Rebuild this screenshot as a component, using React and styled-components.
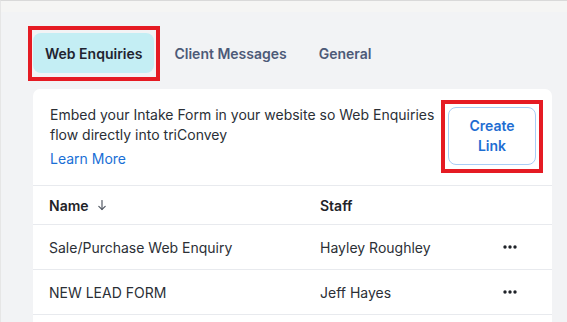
import React from 'react';
import styled, { createGlobalStyle } from 'styled-components';

const GlobalStyle = createGlobalStyle`
	html, body {
		margin: 0;
		padding: 0;
		background: #f2f3f5;
	}
	body {
		font-family: Inter, 'Noto Sans', 'Liberation Sans', sans-serif;
		font-size: 14px;
		color: #2b2f36;
		overflow: hidden;
	}
`;

const rows = [
	{ name: 'Sale/Purchase Web Enquiry', staff: 'Hayley Roughley' },
	{ name: 'NEW LEAD FORM', staff: 'Jeff Hayes' },
	{ name: '', staff: '' },
];

const tabs = ['Web Enquiries', 'Client Messages', 'General'];

const Dots = () => (
	<svg width="14" height="4" viewBox="0 0 14 4">
		<circle cx="2" cy="2" r="1.7" fill="#1f2328" />
		<circle cx="7" cy="2" r="1.7" fill="#1f2328" />
		<circle cx="12" cy="2" r="1.7" fill="#1f2328" />
	</svg>
);

const SortArrow = () => (
	<svg width="10" height="12" viewBox="0 0 10 12" fill="none" stroke="#555b66" strokeWidth="1.2" strokeLinecap="round">
		<path d="M5 1.5v9" />
		<path d="M1.8 7.3L5 10.5l3.2-3.2" />
	</svg>
);

const App = () => {
	return (
		<Page>
			<GlobalStyle />
			<TopStrip />
			<Content>
				<Tabs>
					{tabs.map((t, i) => (
						<Tab key={t} active={i === 0}>
							{t}
						</Tab>
					))}
				</Tabs>
				<Card>
					<Intro>
						<IntroText>
							<Desc>
								Embed your Intake Form in your website so Web Enquiries
								<br />
								flow directly into triConvey
							</Desc>
							<LearnMore href="#">Learn More</LearnMore>
						</IntroText>
						<CreateBtn>
							Create
							<br />
							Link
						</CreateBtn>
					</Intro>
					<HeadRow>
						<HeadCell>
							Name <SortArrow />
						</HeadCell>
						<HeadCell>Staff</HeadCell>
						<span />
					</HeadRow>
					{rows.map((r, i) => (
						<Row key={i}>
							<Cell>{r.name}</Cell>
							<Cell>{r.staff}</Cell>
							<More>{r.name && <Dots />}</More>
						</Row>
					))}
				</Card>
			</Content>
		</Page>
	);
};

const Page = styled.div`
	height: 322px;
	overflow: hidden;
	border-top: 1px solid #d9d9d9;
	border-left: 1px solid #e6e6e6;
	box-sizing: border-box;
`;
const TopStrip = styled.div`
	height: 11px;
	background: #f5f5f4;
`;
const Content = styled.div`
	padding: 21px 15px 0 32px;
`;
const Tabs = styled.div`
	display: flex;
	gap: 8px;
	margin-bottom: 16px;
`;
const Tab = styled.div`
	position: relative;
	height: 40px;
	display: flex;
	align-items: center;
	padding: 0 12px;
	border-radius: 8px;
	font-weight: 600;
	background: ${(p) => (p.active ? '#c4eef4' : 'transparent')};
	color: ${(p) => (p.active ? '#1f2430' : '#4d5a78')};
	&::after {
		content: '';
		display: ${(p) => (p.active ? 'block' : 'none')};
		position: absolute;
		top: -7px;
		left: -5px;
		right: -6px;
		bottom: -8px;
		border: 4px solid #e51b23;
		pointer-events: none;
	}
`;
const Card = styled.div`
	background: #fff;
	border-radius: 7px 7px 0 0;
	height: 260px;
`;
const Intro = styled.div`
	display: flex;
	justify-content: space-between;
	align-items: flex-start;
	padding: 16px 16px 16px 17px;
	border-bottom: 1px solid #e8eaee;
`;
const IntroText = styled.div`
	display: flex;
	flex-direction: column;
	align-items: flex-start;
`;
const Desc = styled.p`
	margin: 0;
	line-height: 20px;
	color: #2b2f36;
`;
const LearnMore = styled.a`
	margin-top: 4px;
	line-height: 20px;
	color: #1a6fd6;
	text-decoration: none;
`;
const CreateBtn = styled.button`
	position: relative;
	margin-top: 2px;
	width: 88px;
	height: 58px;
	padding: 0;
	background: #fff;
	border: 1px solid #a9cdf6;
	border-radius: 8px;
	font-family: inherit;
	font-size: 14px;
	font-weight: 600;
	line-height: 20px;
	color: #1e6dd2;
	&::after {
		content: '';
		position: absolute;
		top: -8px;
		left: -8px;
		right: -8px;
		bottom: -9px;
		border: 4px solid #e51b23;
		box-sizing: border-box;
		pointer-events: none;
	}
`;
const HeadRow = styled.div`
	display: grid;
	grid-template-columns: 271px 1fr 52px;
	align-items: center;
	height: 38px;
	padding: 0 16px;
	border-bottom: 1px solid #e8eaee;
`;
const HeadCell = styled.div`
	display: flex;
	align-items: center;
	gap: 8px;
	font-weight: 600;
	color: #1f2328;
`;
const Row = styled.div`
	display: grid;
	grid-template-columns: 271px 1fr 52px;
	align-items: center;
	height: 44px;
	padding: 0 16px;
	border-bottom: 1px solid #e8eaee;
`;
const Cell = styled.div`
	color: #2b2f36;
`;
const More = styled.div`
	display: flex;
	justify-content: center;
`;

export default App;
